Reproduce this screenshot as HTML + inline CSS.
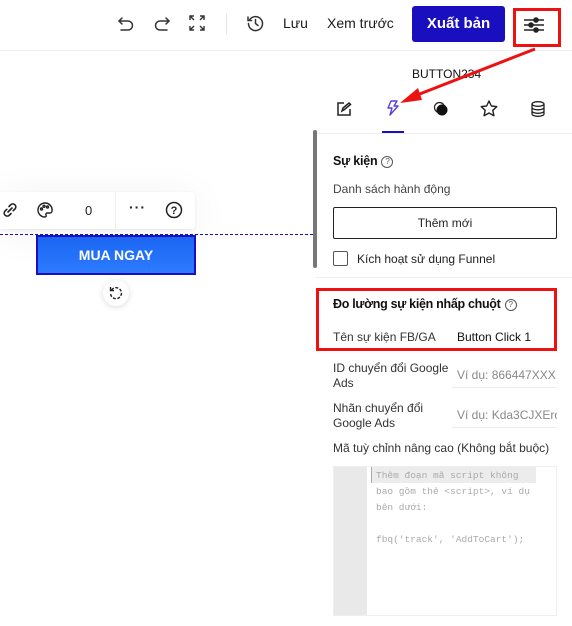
<!DOCTYPE html>
<html><head><meta charset="utf-8">
<style>
*{box-sizing:border-box;margin:0;padding:0}
body{width:572px;height:626px;overflow:hidden;background:#fff;font-family:"Liberation Sans",sans-serif;position:relative;color:#222}
.a{position:absolute}
.t{font-size:12px;color:#333;white-space:nowrap}
svg{position:absolute;overflow:visible}
.q{display:inline-block;width:12px;height:12px;border:1px solid #555;border-radius:50%;font-size:8px;line-height:10px;text-align:center;font-weight:normal;color:#555;vertical-align:1px;margin-left:4px}
</style></head><body>
<div class="a" style="left:0;top:50px;width:572px;height:1px;background:#eee"></div>
<svg style="left:117px;top:14px" width="18" height="18" viewBox="0 0 18 18" fill="none" stroke="#333" stroke-width="1.5" stroke-linecap="round" stroke-linejoin="round"><path d="M5 4 L2 7 L5 10"/><path d="M2 7 H11 a4.5 4.5 0 0 1 0 9 H4"/></svg>
<svg style="left:153px;top:14px" width="18" height="18" viewBox="0 0 18 18" fill="none" stroke="#333" stroke-width="1.5" stroke-linecap="round" stroke-linejoin="round"><path d="M13 4 L16 7 L13 10"/><path d="M16 7 H7 a4.5 4.5 0 0 0 0 9 H14"/></svg>
<svg style="left:189px;top:15px" width="16" height="16" viewBox="0 0 16 16" fill="none" stroke="#333" stroke-width="1.4"><path d="M1 5V1h4M1 1l4 4M11 1h4v4M15 1l-4 4M1 11v4h4M1 15l4-4M15 11v4h-4M15 15l-4-4"/></svg>
<div class="a" style="left:226px;top:14px;width:1px;height:20px;background:#e5e5e5"></div>
<svg style="left:247px;top:15px" width="17" height="17" viewBox="0 0 17 17" fill="none" stroke="#333" stroke-width="1.5" stroke-linecap="round"><path d="M2.5 5 A7 7 0 1 1 1.5 8.5"/><path d="M1 2v3.5h3.5"/><path d="M8.5 4.5v4l2.5 2"/></svg>
<div class="a" style="left:283px;top:15px;font-size:14px;color:#1a1a1a">Lưu</div>
<div class="a" style="left:327px;top:15px;font-size:14px;color:#1a1a1a">Xem trước</div>
<div class="a" style="left:412px;top:6px;width:93px;height:36px;background:#1a0fbf;border-radius:3px;color:#fff;font-size:15px;font-weight:bold;text-align:center;line-height:36px">Xuất bản</div>
<svg style="left:524px;top:17px" width="20" height="16" viewBox="0 0 20 16" stroke="#222" stroke-width="1.6"><path d="M0 3h20M0 8h20M0 13h20"/><circle cx="12" cy="3" r="2" fill="#222"/><circle cx="7" cy="8" r="2" fill="#222"/><circle cx="12" cy="13" r="2" fill="#222"/></svg>
<div class="a" style="left:513px;top:8px;width:48px;height:39px;border:3px solid #ee1111"></div>
<div class="a" style="left:412px;top:67px;font-size:12px;color:#111">BUTTON234</div>
<svg style="left:0;top:0" width="572" height="626"><line x1="535" y1="49" x2="412" y2="97" stroke="#ee1111" stroke-width="3"/><polygon points="400,103 418,88 422,100" fill="#ee1111"/></svg>
<svg style="left:337px;top:102px" width="14" height="14" viewBox="0 0 14 14" fill="none" stroke="#222" stroke-width="1.5"><path d="M7 1H1v12h12V7"/><path d="M5 9l1-3 6-5 1.5 1.5-6 5z"/></svg>
<svg style="left:387px;top:100px" width="12" height="16" viewBox="0 0 12 16" fill="none" stroke="#5a3fe0" stroke-width="1.4" stroke-linejoin="round"><path d="M4 1h6L7 6h4L3 15l2-7H1z"/></svg>
<svg style="left:433px;top:101px" width="16" height="16" viewBox="0 0 16 16"><circle cx="6.5" cy="6.5" r="5" fill="none" stroke="#222" stroke-width="1.2"/><circle cx="9" cy="9" r="5.5" fill="#111"/></svg>
<svg style="left:480px;top:100px" width="18" height="17" viewBox="0 0 18 17" fill="none" stroke="#222" stroke-width="1.4" stroke-linejoin="round"><path d="M9 1l2.4 5 5.4.6-4 3.7 1.1 5.4L9 13 4.1 15.7l1.1-5.4-4-3.7 5.4-.6z"/></svg>
<svg style="left:531px;top:101px" width="14" height="16" viewBox="0 0 14 16" fill="none" stroke="#222" stroke-width="1.3"><ellipse cx="7" cy="3" rx="6" ry="2.3"/><path d="M1 3v10c0 1.3 2.7 2.3 6 2.3s6-1 6-2.3V3M1 6.5c0 1.3 2.7 2.3 6 2.3s6-1 6-2.3M1 10c0 1.3 2.7 2.3 6 2.3s6-1 6-2.3"/></svg>
<div class="a" style="left:382px;top:131px;width:22px;height:2px;background:#1a0fbf"></div>
<div class="a" style="left:316px;top:133px;width:256px;height:1px;background:#eee"></div>
<div class="a" style="left:313px;top:130px;width:4px;height:138px;background:#777;border-radius:2px"></div>
<div class="a" style="left:333px;top:154px;font-size:12.5px;font-weight:bold;color:#111;white-space:nowrap;letter-spacing:-0.2px">Sự kiện<span class="q">?</span></div>
<div class="a t" style="left:333px;top:182px;font-size:12px;color:#444">Danh sách hành động</div>
<div class="a" style="left:333px;top:207px;width:224px;height:32px;border:1px solid #222;border-radius:2px;text-align:center;line-height:30px;font-size:12px;color:#222">Thêm mới</div>
<div class="a" style="left:333px;top:251px;width:15px;height:15px;border:1px solid #555;border-radius:2px"></div>
<div class="a t" style="left:357px;top:252px;color:#222">Kích hoạt sử dụng Funnel</div>
<div class="a" style="left:316px;top:277px;width:256px;height:1px;background:#eee"></div>
<div class="a" style="left:316px;top:288px;width:241px;height:63px;border:3px solid #ee1111"></div>
<div class="a" style="left:333px;top:297px;font-size:12.5px;font-weight:bold;color:#111;white-space:nowrap;letter-spacing:-0.3px">Đo lường sự kiện nhấp chuột<span class="q">?</span></div>
<div class="a t" style="left:333px;top:330px">Tên sự kiện FB/GA</div>
<div class="a t" style="left:457px;top:330px;color:#111">Button Click 1</div>
<div class="a t" style="left:333px;top:361px;line-height:15px">ID chuyển đổi Google<br>Ads</div>
<div class="a t" style="left:457px;top:368px;color:#888;width:100px;overflow:hidden">Ví dụ: 866447XXX</div>
<div class="a" style="left:452px;top:387px;width:105px;height:1px;background:#eee"></div>
<div class="a t" style="left:333px;top:401px;line-height:15px">Nhãn chuyển đổi<br>Google Ads</div>
<div class="a t" style="left:457px;top:408px;color:#888;width:100px;overflow:hidden">Ví dụ: Kda3CJXEroc</div>
<div class="a" style="left:452px;top:427px;width:105px;height:1px;background:#eee"></div>
<div class="a t" style="left:333px;top:441px">Mã tuỳ chỉnh nâng cao (Không bắt buộc)</div>
<div class="a" style="left:333px;top:466px;width:224px;height:150px;border:1px solid #eee"></div>
<div class="a" style="left:334px;top:467px;width:33px;height:148px;background:#e9e9e9"></div>
<div class="a" style="left:371px;top:467px;width:165px;height:16px;background:#ececec;border-left:1px solid #aaa"></div>
<div class="a" style="left:376px;top:468px;font-family:'Liberation Mono',monospace;font-size:9.5px;line-height:16px;color:#aaa;white-space:pre">Thêm đoạn mã script không
bao gồm thẻ &lt;script&gt;, ví dụ
bên dưới:

fbq('track', 'AddToCart');</div>
<div class="a" style="left:0;top:192px;width:195px;height:37px;background:#fff;box-shadow:0 4px 40px rgba(0,0,0,.06),0 1px 3px rgba(0,0,0,.08);border-radius:0 3px 3px 0"></div>
<div class="a" style="left:115px;top:192px;width:1px;height:37px;background:#eee"></div>
<svg style="left:2px;top:202px" width="16" height="16" viewBox="0 0 16 16" fill="none" stroke="#222" stroke-width="1.6" stroke-linecap="round"><path d="M7 4.5l2-2a3 3 0 0 1 4.2 4.2l-2 2M9 11.5l-2 2a3 3 0 0 1-4.2-4.2l2-2M6 10l4-4"/></svg>
<svg style="left:37px;top:202px" width="16" height="16" viewBox="0 0 16 16" fill="none" stroke="#222" stroke-width="1.4"><path d="M8 1a7 7 0 0 0 0 14c1.3 0 1.5-1 1-2s0-2 1.5-2H13a2 2 0 0 0 2-2A7 7 0 0 0 8 1z"/><circle cx="4.5" cy="7" r="1"/><circle cx="7" cy="4.3" r="1"/><circle cx="10.5" cy="5" r="1"/></svg>
<div class="a" style="left:85px;top:203px;font-size:13px;color:#222">0</div>
<div class="a" style="left:129px;top:199px;font-size:14px;font-weight:bold;color:#222;letter-spacing:1px">···</div>
<svg style="left:165px;top:201px" width="18" height="18" viewBox="0 0 18 18" fill="none" stroke="#222" stroke-width="1.5"><circle cx="9" cy="9" r="7.5"/><text x="9" y="13" font-size="11" font-weight="bold" text-anchor="middle" fill="#222" stroke="none" font-family="Liberation Sans">?</text></svg>
<div class="a" style="left:0;top:234px;width:313px;border-top:1px dashed #1a0fbf"></div>
<div class="a" style="left:36px;top:235px;width:160px;height:40px;background:linear-gradient(#1a66f2,#2d7bff);border:2px solid #1a0fbf;color:#fff;font-weight:bold;font-size:14px;text-align:center;line-height:36px">MUA NGAY</div>
<div class="a" style="left:103px;top:280px;width:26px;height:26px;border-radius:50%;background:#fff;box-shadow:0 1px 6px rgba(0,0,0,.15)"></div>
<svg style="left:109px;top:286px" width="14" height="14" viewBox="0 0 14 14" fill="none" stroke="#222" stroke-width="1.4"><path d="M2.5 4A5.5 5.5 0 1 1 1.5 7.5" stroke-dasharray="3 1.5"/><path d="M1.5 1v3.5H5"/></svg>
</body></html>
